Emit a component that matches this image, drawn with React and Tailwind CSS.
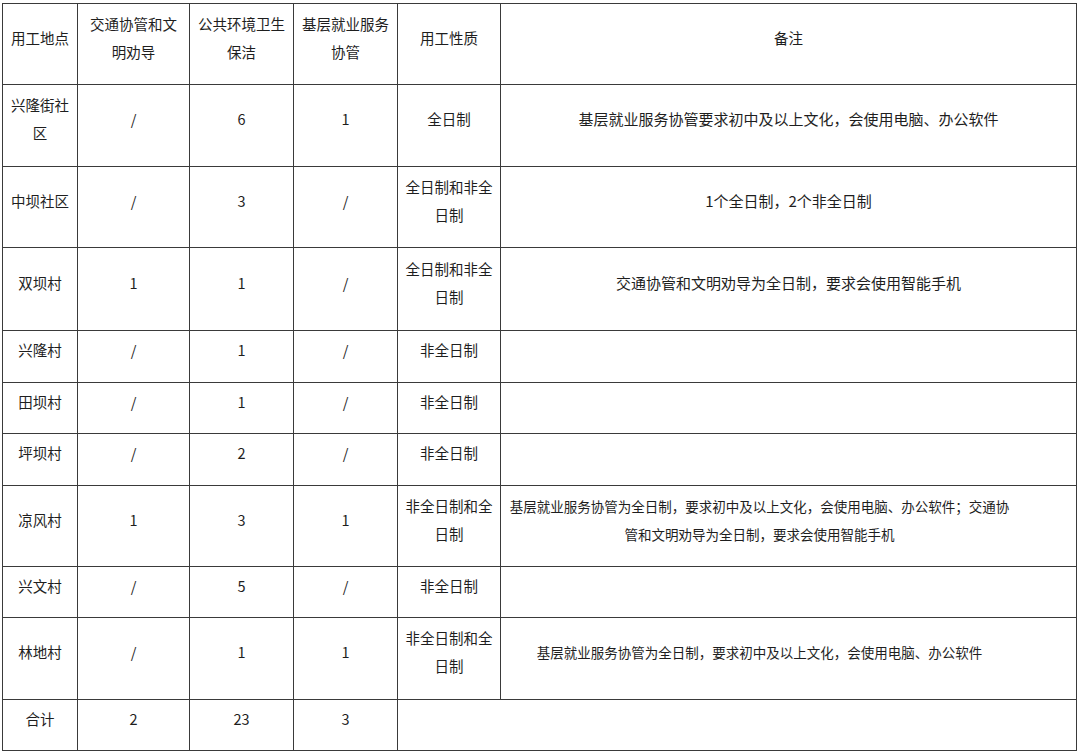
import React from "react";

const big = "text-[15px]";
const small = "text-[13.5px] pr-[58px]";

const rows = [
  { h: "h-[82px]", place: ["兴隆街社", "区"], a: "/", b: "6", c: "1", kind: ["全日制"], note: ["基层就业服务协管要求初中及以上文化，会使用电脑、办公软件"], nc: big },
  { h: "h-[81px]", place: ["中坝社区"], a: "/", b: "3", c: "/", kind: ["全日制和非全", "日制"], note: ["1个全日制，2个非全日制"], nc: big },
  { h: "h-[83px]", place: ["双坝村"], a: "1", b: "1", c: "/", kind: ["全日制和非全", "日制"], note: ["交通协管和文明劝导为全日制，要求会使用智能手机"], nc: big },
  { h: "h-[52px]", place: ["兴隆村"], a: "/", b: "1", c: "/", kind: ["非全日制"], note: [] },
  { h: "h-[51px]", place: ["田坝村"], a: "/", b: "1", c: "/", kind: ["非全日制"], note: [] },
  { h: "h-[52px]", place: ["坪坝村"], a: "/", b: "2", c: "/", kind: ["非全日制"], note: [] },
  {
    h: "h-[81px]", place: ["凉风村"], a: "1", b: "3", c: "1", kind: ["非全日制和全", "日制"],
    note: ["基层就业服务协管为全日制，要求初中及以上文化，会使用电脑、办公软件；交通协", "管和文明劝导为全日制，要求会使用智能手机"],
    nc: small,
  },
  { h: "h-[51px]", place: ["兴文村"], a: "/", b: "5", c: "/", kind: ["非全日制"], note: [] },
  { h: "h-[82px]", place: ["林地村"], a: "/", b: "1", c: "1", kind: ["非全日制和全", "日制"], note: ["基层就业服务协管为全日制，要求初中及以上文化，会使用电脑、办公软件"], nc: small },
];

const cell = "border border-[#3a3a3a] text-center align-middle pb-[13px] whitespace-nowrap";

function Lines({ lines }) {
  return lines.map((l, i) => (
    <React.Fragment key={i}>
      {i > 0 && <br />}
      {l}
    </React.Fragment>
  ));
}

export default function App() {
  return (
    <div
      className="w-[1080px] h-[756px] bg-white overflow-hidden pt-[3px] pl-[2px] text-[14.5px] leading-[28px] text-[#1e1e1e]"
      style={{ fontFamily: '"Noto Sans CJK SC", "Noto Sans", sans-serif' }}
    >
      <table className="table-fixed border-collapse w-[1074px]">
        <colgroup>
          <col className="w-[75px]" />
          <col className="w-[112px]" />
          <col className="w-[104px]" />
          <col className="w-[104px]" />
          <col className="w-[103px]" />
          <col className="w-[576px]" />
        </colgroup>
        <tbody>
          <tr className="h-[81px]">
            <td className={cell}>用工地点</td>
            <td className={cell}>交通协管和文<br />明劝导</td>
            <td className={cell}>公共环境卫生<br />保洁</td>
            <td className={cell}>基层就业服务<br />协管</td>
            <td className={cell}>用工性质</td>
            <td className={cell}>备注</td>
          </tr>
          {rows.map((r, i) => (
            <tr key={i} className={r.h}>
              <td className={cell}><Lines lines={r.place} /></td>
              <td className={cell}>{r.a}</td>
              <td className={cell}>{r.b}</td>
              <td className={cell}>{r.c}</td>
              <td className={cell}><Lines lines={r.kind} /></td>
              <td className={`${cell} ${r.nc || ""}`}><Lines lines={r.note} /></td>
            </tr>
          ))}
          <tr className="h-[51px]">
            <td className={cell}>合计</td>
            <td className={cell}>2</td>
            <td className={cell}>23</td>
            <td className={cell}>3</td>
            <td className={cell} colSpan={2}></td>
          </tr>
        </tbody>
      </table>
    </div>
  );
}
